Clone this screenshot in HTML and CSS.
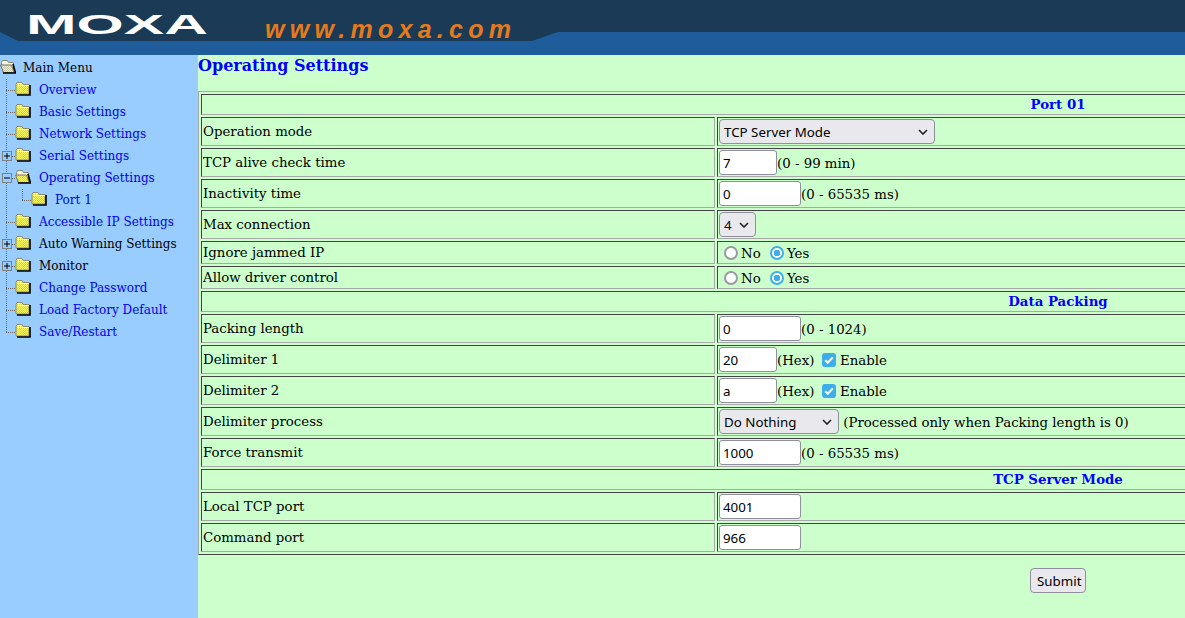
FILE: index.html
```html
<!DOCTYPE html>
<html lang="en">
<head>
<meta charset="utf-8">
<title>Operating Settings</title>
<link rel="stylesheet" href="styles.css">
</head>
<body>
<svg width="0" height="0" class="defs" aria-hidden="true">
  <defs>
    <pattern id="dither" width="2" height="2" patternUnits="userSpaceOnUse">
      <rect width="2" height="2" fill="#ffff66"/>
      <rect width="1" height="1" fill="#c4c4a8"/>
      <rect x="1" y="1" width="1" height="1" fill="#c4c4a8"/>
    </pattern>
    <symbol id="folder" viewBox="0 0 16 14">
      <path d="M1 2.5 L2 .5 H7 L8 2.5 H14 V12 H1 Z" fill="url(#dither)" stroke="#8a8a70" stroke-width="1"/>
      <path d="M2 1.5 H7 M2 3.5 H14" stroke="#fff" stroke-width="1"/>
      <path d="M15 3 V13 H2" fill="none" stroke="#000" stroke-width="1.6"/>
    </symbol>
    <symbol id="folder-open" viewBox="0 0 16 14">
      <path d="M1.5 2.5 L2.5 .5 H7.5 L8.5 2.5 H13.5 V12.5 H3 Z" fill="#f4f4e0" stroke="#8a8a70" stroke-width="1"/>
      <path d="M0.5 5 H11.5 L14 12.5 H3.5 Z" fill="url(#dither)" stroke="#77775f" stroke-width="1"/>
      <path d="M13 4 L15.5 13 H3" fill="none" stroke="#000" stroke-width="1.6"/>
    </symbol>
    <symbol id="plus" viewBox="0 0 10 10">
      <rect x=".5" y=".5" width="9" height="9" fill="none" stroke="#808080"/>
      <path d="M2 5 H8 M5 2 V8" stroke="#000" stroke-width="1"/>
    </symbol>
    <symbol id="minus" viewBox="0 0 10 10">
      <rect x=".5" y=".5" width="9" height="9" fill="none" stroke="#808080"/>
      <path d="M2 5 H8" stroke="#000" stroke-width="1"/>
    </symbol>
  </defs>
</svg>

<header class="banner">
  <svg class="banner-art" width="1185" height="55" viewBox="0 0 1185 55" role="img" aria-label="MOXA www.moxa.com">
    <rect width="1185" height="55" fill="#1f5c9c"/>
    <path d="M0 0 H1185 V32 H558 L532 41 H18 L0 32 Z" fill="#1a3a55"/>
    <text x="26" y="34" class="logo" textLength="182" lengthAdjust="spacingAndGlyphs">MOXA</text>
    <text x="265" y="38" class="site" textLength="246" lengthAdjust="spacing">www.moxa.com</text>
  </svg>
</header>

<div class="frames">
  <nav class="tree">
    <div class="root"><svg class="ico"><use href="#folder-open"/></svg><span class="label">Main Menu</span></div>
    <div class="node"><span class="branch"></span><svg class="ico"><use href="#folder"/></svg><a class="label link" href="#">Overview</a></div>
    <div class="node"><span class="branch"></span><svg class="ico"><use href="#folder"/></svg><a class="label link" href="#">Basic Settings</a></div>
    <div class="node"><span class="branch"></span><svg class="ico"><use href="#folder"/></svg><a class="label link" href="#">Network Settings</a></div>
    <div class="node"><span class="branch"></span><svg class="toggle"><use href="#plus"/></svg><svg class="ico"><use href="#folder"/></svg><a class="label link" href="#">Serial Settings</a></div>
    <div class="node"><span class="branch"></span><svg class="toggle"><use href="#minus"/></svg><svg class="ico"><use href="#folder-open"/></svg><a class="label link" href="#">Operating Settings</a></div>
    <div class="node sub"><span class="branch"></span><span class="branch inner"></span><svg class="ico"><use href="#folder"/></svg><a class="label link" href="#">Port 1</a></div>
    <div class="node"><span class="branch"></span><svg class="ico"><use href="#folder"/></svg><a class="label link" href="#">Accessible IP Settings</a></div>
    <div class="node"><span class="branch"></span><svg class="toggle"><use href="#plus"/></svg><svg class="ico"><use href="#folder"/></svg><span class="label">Auto Warning Settings</span></div>
    <div class="node"><span class="branch"></span><svg class="toggle"><use href="#plus"/></svg><svg class="ico"><use href="#folder"/></svg><span class="label">Monitor</span></div>
    <div class="node"><span class="branch"></span><svg class="ico"><use href="#folder"/></svg><a class="label link" href="#">Change Password</a></div>
    <div class="node"><span class="branch"></span><svg class="ico"><use href="#folder"/></svg><a class="label link" href="#">Load Factory Default</a></div>
    <div class="node last"><span class="branch"></span><svg class="ico"><use href="#folder"/></svg><a class="label link" href="#">Save/Restart</a></div>
  </nav>

  <main class="content">
    <h2 class="title">Operating Settings</h2>
    <form class="form">
      <table class="settings">
        <colgroup><col class="col-name"><col></colgroup>
        <tr class="head"><th colspan="2">Port 01</th></tr>
        <tr class="field"><td>Operation mode</td><td><select class="sel-mode"><option>TCP Server Mode</option></select></td></tr>
        <tr class="field"><td>TCP alive check time</td><td><input class="in-short" value="7">(0 - 99 min)</td></tr>
        <tr class="field"><td>Inactivity time</td><td><input class="in-long" value="0">(0 - 65535 ms)</td></tr>
        <tr class="field"><td>Max connection</td><td><select class="sel-max"><option>4</option></select></td></tr>
        <tr class="choice"><td>Ignore jammed IP</td><td><input type="radio" name="jam">No <input type="radio" name="jam" checked>Yes</td></tr>
        <tr class="choice"><td>Allow driver control</td><td><input type="radio" name="drv">No <input type="radio" name="drv" checked>Yes</td></tr>
        <tr class="head"><th colspan="2">Data Packing</th></tr>
        <tr class="field"><td>Packing length</td><td><input class="in-long" value="0">(0 - 1024)</td></tr>
        <tr class="field"><td>Delimiter 1</td><td><input class="in-short" value="20">(Hex) <input type="checkbox" class="check" checked> Enable</td></tr>
        <tr class="field"><td>Delimiter 2</td><td><input class="in-short" value="a">(Hex) <input type="checkbox" class="check" checked> Enable</td></tr>
        <tr class="field"><td>Delimiter process</td><td><select class="sel-proc"><option>Do Nothing</option></select> (Processed only when Packing length is 0)</td></tr>
        <tr class="field"><td>Force transmit</td><td><input class="in-long" value="1000">(0 - 65535 ms)</td></tr>
        <tr class="head"><th colspan="2">TCP Server Mode</th></tr>
        <tr class="field"><td>Local TCP port</td><td><input class="in-long" value="4001"></td></tr>
        <tr class="field"><td>Command port</td><td><input class="in-long" value="966"></td></tr>
      </table>
      <div class="actions"><button type="button" class="submit">Submit</button></div>
    </form>
  </main>
</div>
</body>
</html>
```
FILE: styles.css
```css
html, body { margin: 0; padding: 0; height: 100%; overflow: hidden; }
body { font-family: "DejaVu Serif", serif; font-size: 13.33px; color: #000; background: #ccffcc; }
.defs { display: block; height: 0; }

.banner { height: 55px; }
.banner-art { display: block; }
.logo { font-family: "Liberation Sans", sans-serif; font-weight: 700; font-size: 27px; fill: #fff; }
.site { font-family: "Liberation Sans", sans-serif; font-weight: 700; font-style: italic; font-size: 25px; fill: #e57a1c; }

.frames { display: flex; height: 563px; overflow: hidden; }

.tree { flex: 0 0 198px; background: #99ccff; padding-top: 1px; font-size: 12px; }
.root, .node { display: flex; align-items: center; height: 22px; white-space: nowrap; position: relative; }
.root { height: 23px; padding-top: 1px; box-sizing: border-box; }
.node {
  padding-left: 15px;
  background: repeating-linear-gradient(to bottom, #666 0 1px, transparent 1px 2px) 6px 0 / 1px 100% no-repeat;
}
.node.last { background-size: 1px 11px; }
.node.sub { padding-left: 31px; }
.branch {
  position: absolute; left: 6px; top: 11px; width: 9px; height: 1px;
  background: repeating-linear-gradient(to right, #666 0 1px, transparent 1px 2px);
}
.branch.inner {
  left: 22px; top: 0; height: 12px; width: 9px;
  background:
    repeating-linear-gradient(to right, #666 0 1px, transparent 1px 2px) 0 11px / 9px 1px no-repeat,
    repeating-linear-gradient(to bottom, #666 0 1px, transparent 1px 2px) 0 0 / 1px 12px no-repeat;
}
.sub > .branch:first-child { width: 0; }
.toggle { position: absolute; left: 2px; top: 6px; width: 10px; height: 10px; background: #99ccff; }
.ico { width: 16px; height: 14px; flex: none; margin-bottom: 2px; }
.root .label { margin-left: 7px; }
.label { margin-left: 8px; line-height: 22px; color: #000; }
.link { color: #0000ee; text-decoration: none; }

.content { flex: 0 0 auto; width: 987px; overflow: hidden; }
.title { margin: 0; height: 36px; font-size: 16px; font-weight: 700; line-height: 21px; color: #0000ff; }
.form { width: 1720px; }
.settings {
  width: 100%; table-layout: fixed; border-collapse: separate; border-spacing: 2px;
  border: 1px solid; border-color: #a9a9a9 #444 #444 #a9a9a9;
}
.col-name { width: 514px; }
.settings td, .settings th {
  padding: 1px; border: 1px solid; border-color: #444 #a9a9a9 #a9a9a9 #444; font-size: 13.33px; vertical-align: middle;
}
.settings th { height: 17px; color: #0000ff; font-weight: 700; text-align: center; line-height: 17px; }
.field td { height: 25px; line-height: 17px; }
.choice td { height: 19px; line-height: 17px; }
.settings .choice td:last-child { padding: 2px 1px 0; }

input:not([type]), select, .submit {
  font-family: "Noto Sans", sans-serif; font-size: 13.33px; box-sizing: border-box; height: 25px; margin: 0;
}
input:not([type]) { padding: 1px 3px; border: 1px solid #8f8f9d; border-radius: 3px; background: #fff; color: #000; }
.in-short { width: 58px; }
.in-long { width: 82px; }
select {
  appearance: none; padding: 0 4px; border: 1px solid #8f8f9d; border-radius: 4px; color: #000;
  background: #e9e9ed url("data:image/svg+xml,%3Csvg xmlns='http://www.w3.org/2000/svg' width='10' height='6'%3E%3Cpath d='M1 1l4 4 4-4' fill='none' stroke='%23222' stroke-width='1.6'/%3E%3C/svg%3E") no-repeat right 6px center;
}
.sel-mode { width: 216px; }
.sel-max { width: 37px; }
.sel-proc { width: 120px; }

input[type="radio"] {
  appearance: none; box-sizing: border-box; width: 14px; height: 14px; margin: 0 3px 0 5px; vertical-align: -2px;
  border: 2px solid #9a9aa5; border-radius: 50%; background: #fff;
}
input[type="radio"]:checked { border-color: #3daee9; background: radial-gradient(circle, #3daee9 0 3px, #fff 3.5px); }
.check {
  appearance: none; box-sizing: border-box; width: 14px; height: 14px; margin: 0 0 0 3px; vertical-align: -2px;
  border-radius: 3px;
  background: #3daee9 url("data:image/svg+xml,%3Csvg xmlns='http://www.w3.org/2000/svg' width='14' height='14'%3E%3Cpath d='M3.2 7.2l2.6 2.6 5-5.4' fill='none' stroke='%23fff' stroke-width='2'/%3E%3C/svg%3E") no-repeat center;
}

.actions { text-align: center; padding-top: 13px; }
.submit { width: 56px; padding: 1px 6px; border: 1px solid #8f8f9d; border-radius: 4px; background: #e9e9ed; color: #000; }
```
